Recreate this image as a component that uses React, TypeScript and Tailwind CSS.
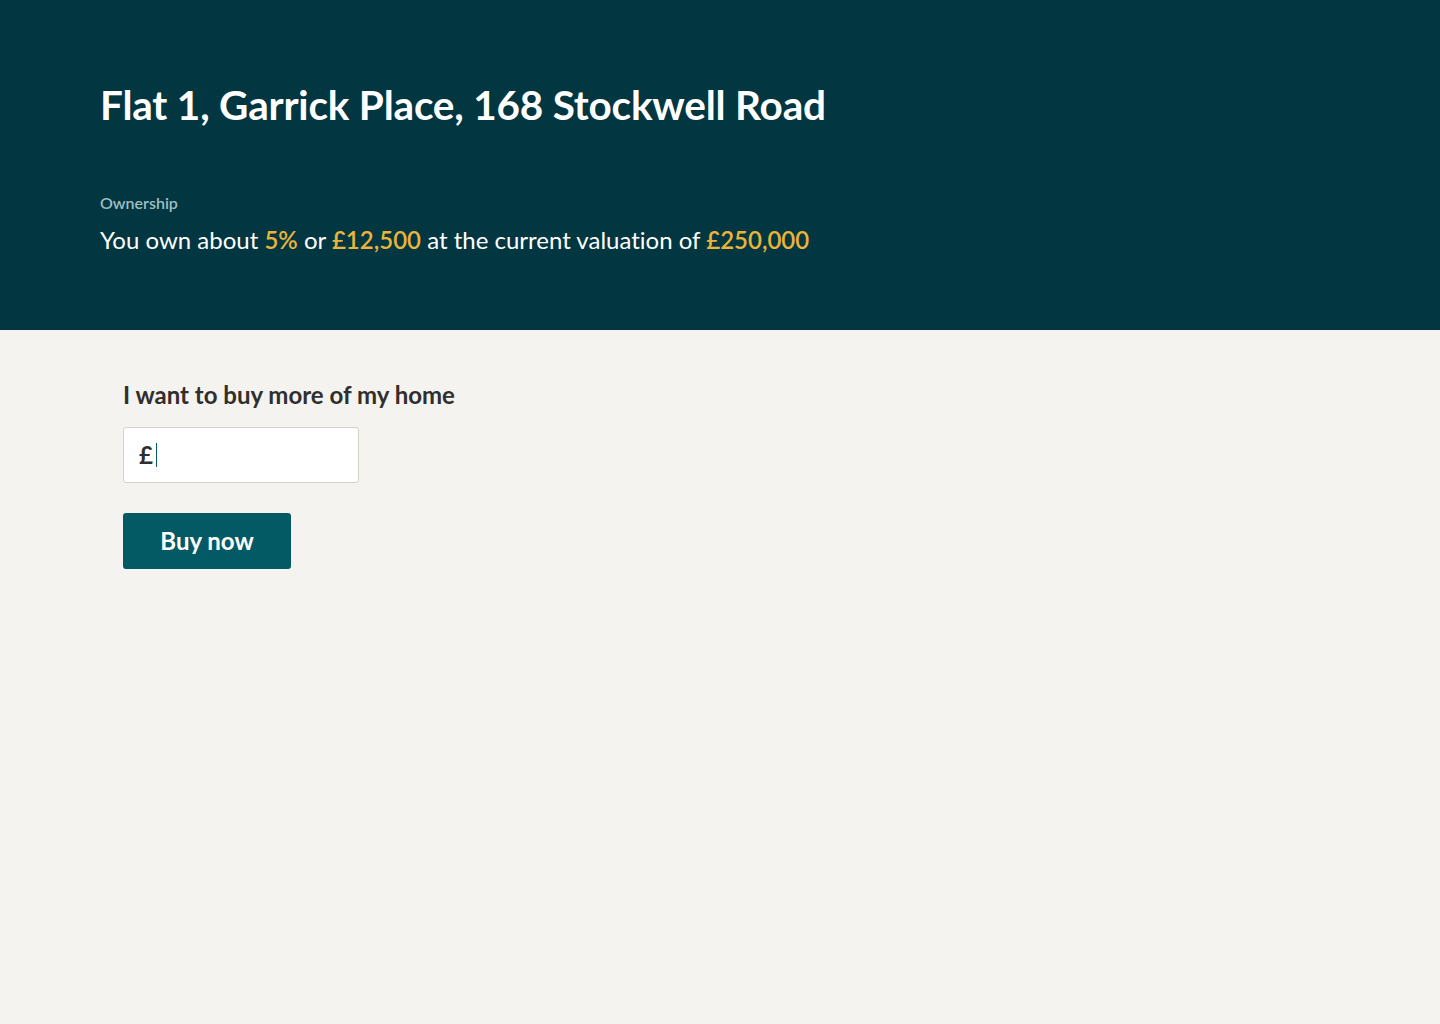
export default function App() {
  return (
    <div className="min-h-[1024px] bg-[#f4f3ef] font-['Lato',sans-serif] [font-variant-ligatures:none]">
      <header className="h-[330px] bg-[#023641] px-[100px] pt-[81px]">
        <h1 className="text-[40.5px] font-bold leading-[48px] tracking-[-0.2px] text-white">
          Flat 1, Garrick Place, 168 Stockwell Road
        </h1>
        <div className="mt-[64px] text-[16px] font-semibold leading-[20px] text-[#9fbec2]">Ownership</div>
        <p className="mt-[12px] text-[24px] leading-[30px] text-white">
          You own about <span className="font-semibold text-[#eab33a]">5%</span> or{" "}
          <span className="font-semibold text-[#eab33a]">£12,500</span> at the current valuation of{" "}
          <span className="font-semibold text-[#eab33a]">£250,000</span>
        </p>
      </header>

      <main className="px-[123px] pt-[49px]">
        <h2 className="text-[24px] font-bold leading-[32px] text-[#302f2d]">I want to buy more of my home</h2>
        <div className="mt-[16px] flex h-[56px] w-[236px] items-center rounded-[3px] border border-[#d6d1c9] bg-white pl-[15px]">
          <span className="text-[24px] font-bold text-[#302f2d]">£</span>
          <span className="ml-[3px] h-[24px] w-px bg-[#035a64]" />
        </div>
        <button className="mt-[30px] flex h-[56px] w-[168px] items-center justify-center rounded-[3px] bg-[#035a64] text-[24px] font-bold text-white">
          Buy now
        </button>
      </main>
    </div>
  );
}
